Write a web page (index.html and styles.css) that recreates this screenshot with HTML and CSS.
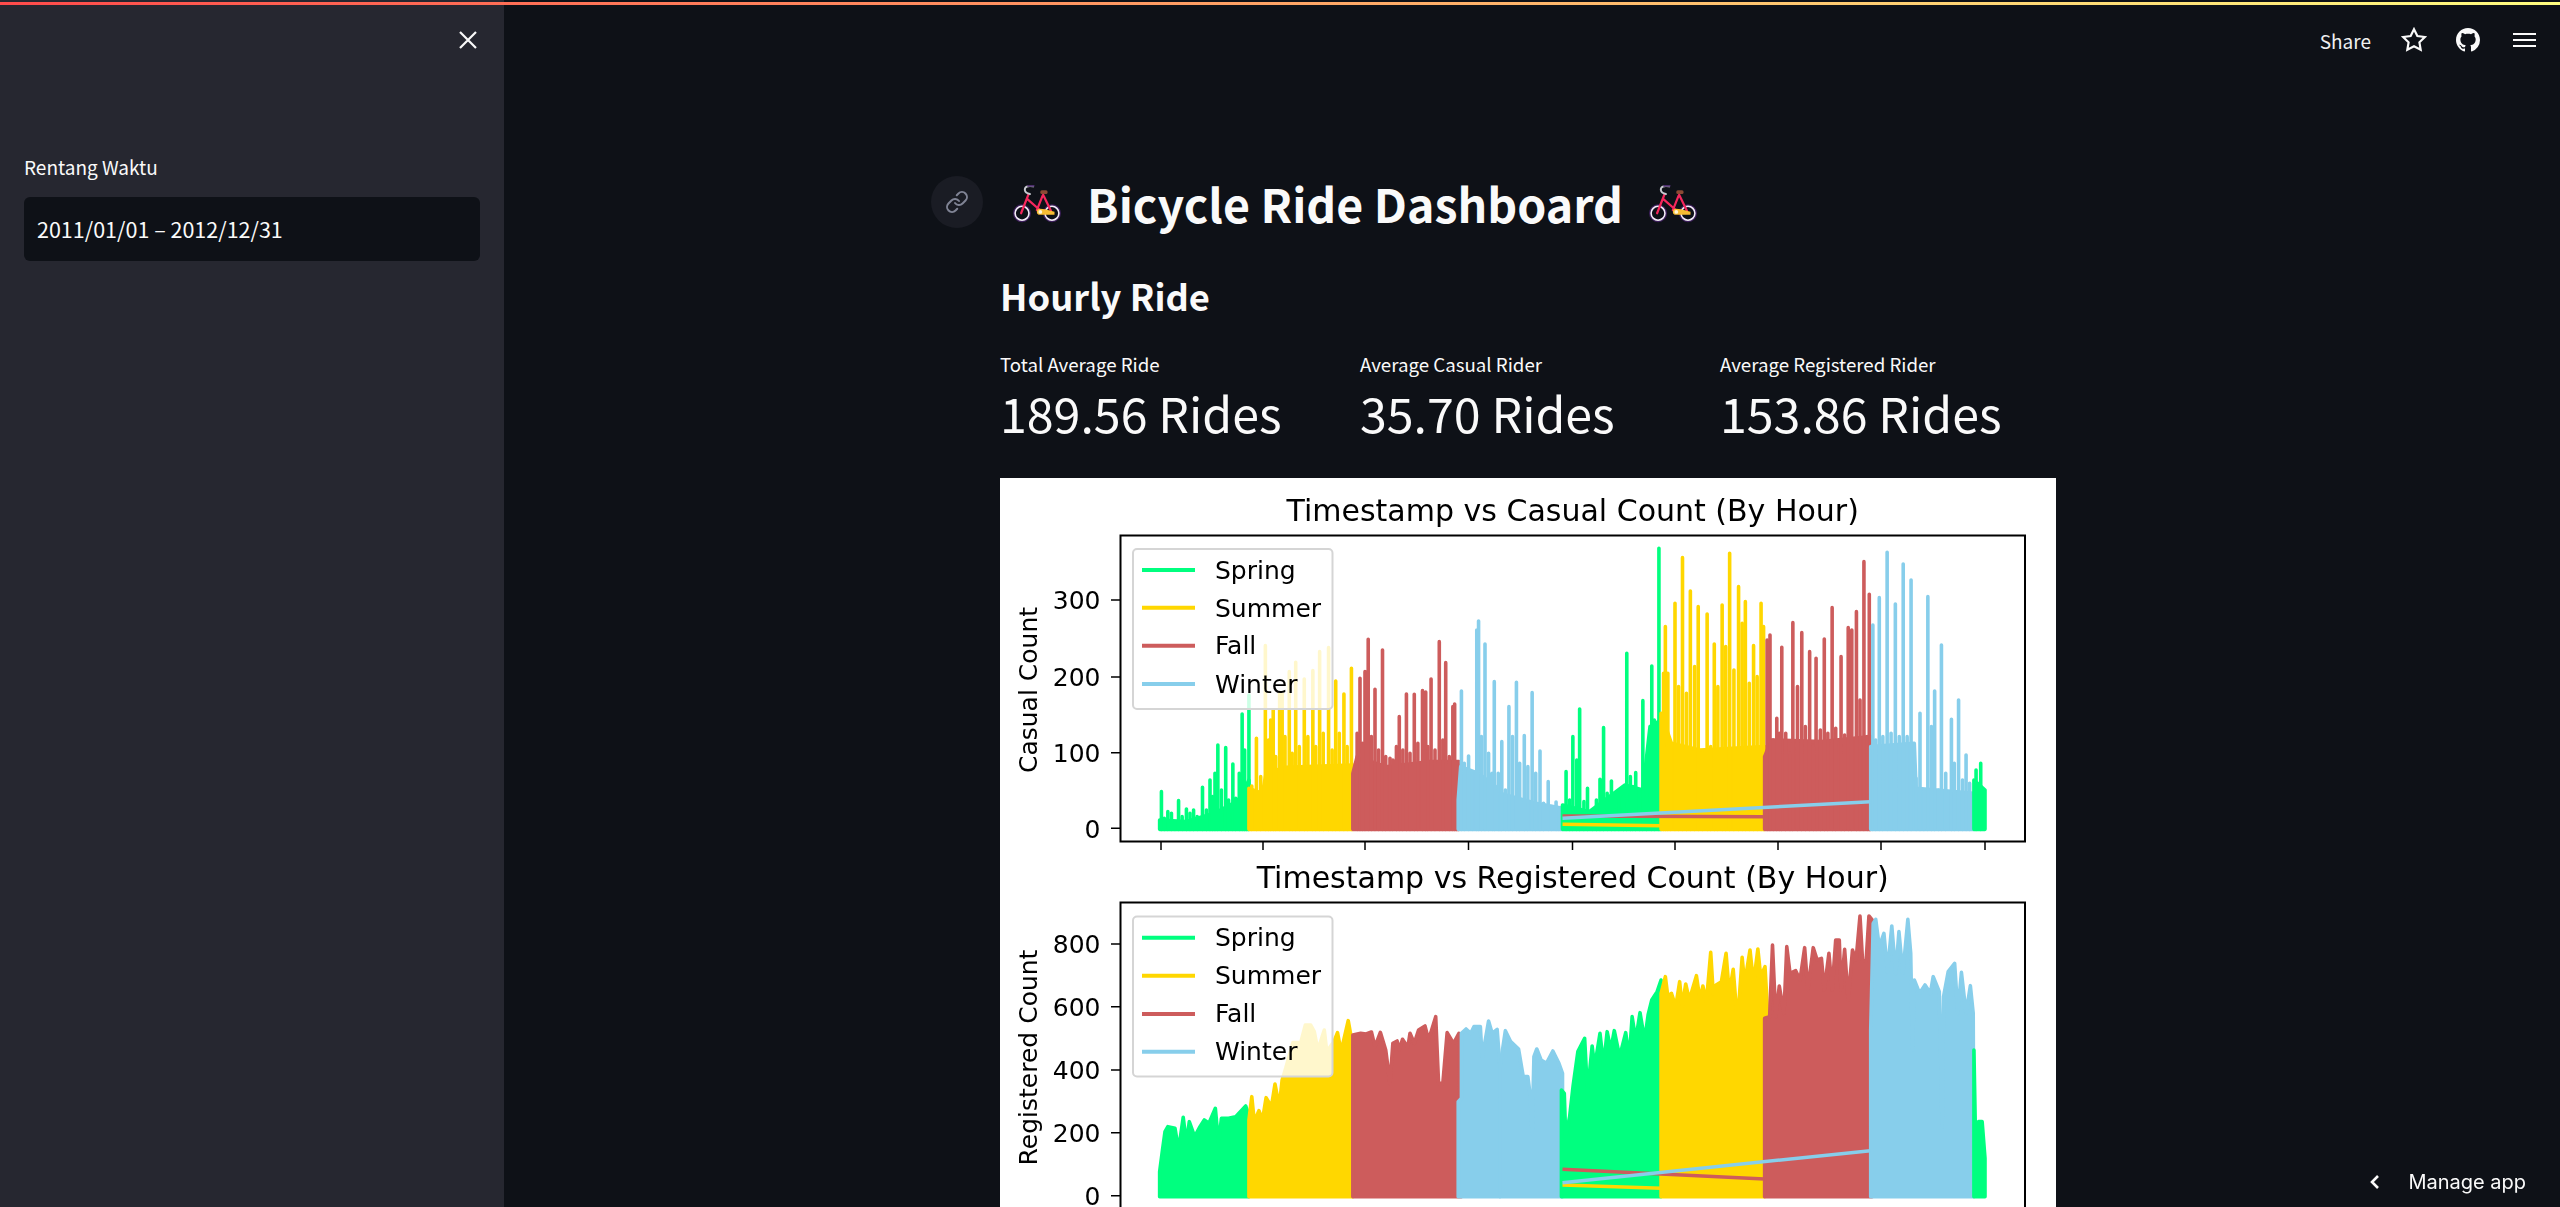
FILE: index.html
```html
<!DOCTYPE html>
<html lang="en">
<head>
<meta charset="utf-8">
<title>Bicycle Ride Dashboard</title>
<link rel="stylesheet" href="styles.css">
</head>
<body>
<svg class="defs" width="0" height="0" aria-hidden="true">
  <symbol id="bike" viewBox="30 50 165 125">
    <circle cx="65" cy="145" r="24" fill="none" stroke="#3d1f5c" stroke-width="9"/>
    <circle cx="160" cy="145" r="24" fill="none" stroke="#3d1f5c" stroke-width="9"/>
    <circle cx="65" cy="145" r="22" fill="none" stroke="#f4eef6" stroke-width="5"/>
    <circle cx="160" cy="145" r="22" fill="none" stroke="#f4eef6" stroke-width="5"/>
    <path d="M86 84 62 145M82 100 125 138M132 86 157 138M130 90 112 135" fill="none" stroke="#f5275c" stroke-width="7" stroke-linecap="round"/>
    <path d="M100 60C84 56 72 62 74 72C75 80 82 83 90 84" fill="none" stroke="#c9ccd2" stroke-width="6" stroke-linecap="round"/>
    <path d="M84 58 102 58" stroke="#4b2d6b" stroke-width="6" stroke-linecap="round"/>
    <rect x="123" y="72" width="23" height="12" rx="5" fill="#8b4a34"/>
    <path d="M112 140Q112 131 122 131L138 132 168 140V150H122Q112 150 112 140Z" fill="#f8bd33"/>
    <circle cx="123" cy="141" r="6" fill="#fff6d8"/>
  </symbol>
</svg>

<div class="decoration"></div>
<div class="app">
  <aside class="sidebar">
    <div class="sidebar-top">
      <svg class="close-icon" viewBox="0 0 18 18"><path d="M1 1 17 17M17 1 1 17"/></svg>
    </div>
    <label class="field-label">Rentang Waktu</label>
    <div class="date-input">2011/01/01 – 2012/12/31</div>
  </aside>

  <main class="main">
    <header class="toolbar">
      <span class="share">Share</span>
      <svg class="star-icon" viewBox="0 0 24 24"><polygon points="12 2 15.09 8.26 22 9.27 17 14.14 18.18 21.02 12 17.77 5.82 21.02 7 14.14 2 9.27 8.91 8.26"/></svg>
      <svg class="github-icon" viewBox="0 0 16 16"><path d="M8 0C3.58 0 0 3.58 0 8c0 3.54 2.29 6.53 5.47 7.59.4.07.55-.17.55-.38 0-.19-.01-.82-.01-1.49-2.01.37-2.53-.49-2.69-.94-.09-.23-.48-.94-.82-1.13-.28-.15-.68-.52-.01-.53.63-.01 1.08.58 1.23.82.72 1.21 1.87.87 2.33.66.07-.52.28-.87.51-1.07-1.78-.2-3.64-.89-3.64-3.95 0-.87.31-1.59.82-2.15-.08-.2-.36-1.02.08-2.12 0 0 .67-.21 2.2.82.64-.18 1.32-.27 2-.27.68 0 1.36.09 2 .27 1.53-1.04 2.2-.82 2.2-.82.44 1.1.16 1.92.08 2.12.51.56.82 1.27.82 2.15 0 3.07-1.87 3.75-3.65 3.95.29.25.54.73.54 1.48 0 1.07-.01 1.93-.01 2.2 0 .21.15.46.55.38A8.013 8.013 0 0016 8c0-4.42-3.58-8-8-8z"/></svg>
      <svg class="menu-icon" viewBox="0 0 23 14"><path d="M0 1H23M0 7H23M0 13H23"/></svg>
    </header>

    <section class="content">
      <div class="title-row">
        <a class="anchor-link">
          <svg viewBox="0 0 24 24"><path d="M10 13a5 5 0 0 0 7.54.54l3-3a5 5 0 0 0-7.07-7.07l-1.72 1.71"/><path d="M14 11a5 5 0 0 0-7.54-.54l-3 3a5 5 0 0 0 7.07 7.07l1.71-1.71"/></svg>
        </a>
        <svg class="bike-icon"><use href="#bike"/></svg>
        <h1 class="title">Bicycle Ride Dashboard</h1>
        <svg class="bike-icon"><use href="#bike"/></svg>
      </div>
      <h2 class="subtitle">Hourly Ride</h2>
      <div class="metrics">
        <div class="metric"><div class="metric-label">Total Average Ride</div><div class="metric-value">189.56 Rides</div></div>
        <div class="metric"><div class="metric-label">Average Casual Rider</div><div class="metric-value">35.70 Rides</div></div>
        <div class="metric"><div class="metric-label">Average Registered Rider</div><div class="metric-value">153.86 Rides</div></div>
      </div>

      <svg class="chart" width="1056" height="729" viewBox="1000 478 1056 729">
        <!-- chart 1 -->
        <g class="series" transform="translate(1000 480) scale(.35714 .33333)">
          <g class="spring">
            <polygon points="447,1048 447,1020 520,1025 600,1000 670,960 697,900 697,1048"/>
            <path d="M452 1048V935M470 1048V995M500 1048V962M522 1048V987M542 1048V990M567 1048V922M588 1048V900M602 1048V880M610 1048V795M632 1048V803M652 1048V852M678 1048V702M697 1048V645"/>
            <path d="M460 1048V1015M480 1048V1000M490 1048V1025M510 1048V1010M532 1048V1000M552 1048V1010M578 1048V990M595 1048V950M620 1048V930M640 1048V960M660 1048V955M670 1048V880M685 1048V810M690 1048V940"/>
          </g>
          <g class="summer">
            <polygon points="697,1048 697,925 735,940 745,880 800,862 900,858 988,855 988,1048"/>
            <path d="M705 1048V918M718 1048V775M743 1048V497M752 1048V780M765 1048V690M783 1048V640M790 1048V640M810 1048V575M828 1048V547M852 1048V597M876 1048V572M895 1048V515M920 1048V503M940 1048V603M963 1048V642M984 1048V565"/>
            <path d="M730 1048V890M758 1048V720M772 1048V830M798 1048V770M818 1048V820M838 1048V800M862 1048V770M884 1048V800M905 1048V760M930 1048V810M950 1048V760M972 1048V800"/>
          </g>
          <g class="fall">
            <polygon points="988,1048 988,880 1000,830 1080,860 1200,845 1285,845 1285,1048"/>
            <path d="M1008 1048V595M1022 1048V575M1031 1048V478M1050 1048V628M1071 1048V510M1092 1048V835M1118 1048V710M1138 1048V642M1160 1048V643M1183 1048V632M1192 1048V636M1207 1048V597M1230 1048V485M1248 1048V548M1268 1048V680M1273 1048V672"/>
            <path d="M1000 1048V760M1015 1048V790M1040 1048V770M1060 1048V810M1080 1048V830M1100 1048V840M1110 1048V800M1128 1048V810M1148 1048V820M1170 1048V790M1198 1048V800M1218 1048V810M1240 1048V780M1258 1048V830M1278 1048V850"/>
          </g>
          <g class="winter">
            <polygon points="1283,1048 1283,960 1290,860 1340,880 1400,930 1400,1048"/>
            <path d="M1292 1048V633M1312 1048V828M1335 1048V450M1340 1048V423M1358 1048V492M1384 1048V605"/>
            <path d="M1300 1048V850M1322 1048V880M1348 1048V770M1368 1048V820M1378 1048V880M1395 1048V880"/>
          </g>
        </g>
        <g class="series" transform="translate(1500 480) scale(.35714 .33333)">
          <g class="winter">
            <polygon points="0,940 100,970 175,985 175,1048 0,1048"/>
            <path d="M5 1048V785M25 1048V680M46 1048V607M68 1048V767M90 1048V638M112 1048V813M135 1048V905M157 1048V966"/>
            <path d="M15 1048V930M35 1048V770M55 1048V850M78 1048V860M100 1048V880M122 1048V970M145 1048V980M165 1048V990"/>
          </g>
          <g class="spring">
            <polygon points="175,1048 175,975 250,995 350,915 400,930 420,740 451,720 451,1048"/>
            <path d="M185 1048V875M204 1048V770M223 1048V687M245 1048V925M280 1048V898M290 1048V743M312 1048V903M333 1048V955M355 1048V520M380 1048V878M400 1048V662M425 1048V558M445 1048V205"/>
            <path d="M195 1048V960M215 1048V840M235 1048V965M260 1048V990M270 1048V960M300 1048V940M322 1048V990M345 1048V950M365 1048V890M372 1048V920M390 1048V930M410 1048V900M432 1048V720"/>
          </g>
          <g class="summer">
            <polygon points="451,1048 451,700 480,790 560,810 741,800 741,1048"/>
            <path d="M463 1048V440M470 1048V580M490 1048V370M511 1048V233M533 1048V333M555 1048V380M580 1048V402M600 1048V492M622 1048V375M643 1048V220M668 1048V320M687 1048V365M710 1048V497M731 1048V370"/>
            <path d="M458 1048V580M478 1048V790M500 1048V620M522 1048V640M545 1048V560M567 1048V870M590 1048V800M610 1048V620M632 1048V500M655 1048V570M678 1048V430M698 1048V610M720 1048V590M738 1048V440"/>
            <path class="conn" d="M175 1033 451 1037"/>
          </g>
          <g class="fall">
            <polygon points="741,1048 741,830 760,780 900,785 1038,770 1038,1048"/>
            <path d="M756 1048V465M775 1048V715M789 1048V502M820 1048V428M845 1048V458M867 1048V515M885 1048V535M908 1048V477M930 1048V383M955 1048V530M975 1048V443M998 1048V395M1019 1048V245M1034 1048V343"/>
            <path d="M748 1048V480M765 1048V780M782 1048V760M800 1048V760M812 1048V820M833 1048V620M855 1048V740M877 1048V800M897 1048V750M918 1048V760M940 1048V745M965 1048V765M985 1048V450M1008 1048V660M1028 1048V770"/>
            <path class="conn" d="M175 1008 741 1010"/>
          </g>
          <g class="winter">
            <polygon points="1038,1048 1038,800 1160,790 1165,925 1327,940 1327,1048"/>
            <path d="M1044 1048V435M1062 1048V353M1084 1048V217M1107 1048V372M1129 1048V252M1151 1048V300M1176 1048V700M1198 1048V350M1217 1048V633M1236 1048V495M1264 1048V718M1284 1048V660M1305 1048V825"/>
            <path d="M1052 1048V780M1072 1048V770M1095 1048V760M1118 1048V770M1140 1048V770M1165 1048V895M1187 1048V935M1208 1048V740M1228 1048V930M1248 1048V880M1272 1048V850M1295 1048V900M1315 1048V910"/>
            <path class="conn" d="M175 1015 1037 965"/>
          </g>
          <g class="spring">
            <polygon points="1327,1048 1327,900 1358,930 1358,1048"/>
            <path d="M1333 1048V870M1346 1048V850"/>
          </g>
        </g>

        <rect class="spine" x="1120.5" y="535.5" width="904.5" height="306"/>
        <path class="tick" d="M1111 828.3H1120M1111 752.7H1120M1111 677H1120M1111 600H1120M1161 842V850M1263 842V850M1365 842V850M1468.5 842V850M1572.5 842V850M1675 842V850M1778 842V850M1881 842V850M1985 842V850"/>
        <g class="tick-labels">
          <text x="1100.5" y="837.5">0</text>
          <text x="1100.5" y="762">100</text>
          <text x="1100.5" y="686">200</text>
          <text x="1100.5" y="609">300</text>
        </g>
        <text class="axis-label" transform="translate(1037 690) rotate(-90)">Casual Count</text>
        <text class="chart-title" x="1572.7" y="520.5">Timestamp vs Casual Count (By Hour)</text>
        <rect class="legend" x="1133" y="549" width="199.5" height="160" rx="4"/>
        <path class="handle spring-line" d="M1142 570H1195"/>
        <path class="handle summer-line" d="M1142 607.7H1195"/>
        <path class="handle fall-line" d="M1142 645.7H1195"/>
        <path class="handle winter-line" d="M1142 684H1195"/>
        <g class="legend-text">
          <text x="1215" y="578.5">Spring</text>
          <text x="1215" y="616.5">Summer</text>
          <text x="1215" y="654">Fall</text>
          <text x="1215" y="692.5">Winter</text>
        </g>

        <!-- chart 2 -->
        <g class="series" transform="translate(1000 850) scale(.35714 .33333)">
          <polygon class="spring" points="447,1040 447,965 455,900 462,845 470,830 490,835 500,900 513,802 522,880 530,815 545,860 560,830 572,810 585,820 603,775 612,880 620,805 640,805 660,800 688,768 697,795 697,1040"/>
          <polygon class="summer" points="697,1040 697,810 705,740 712,815 725,782 735,810 745,743 760,770 770,702 782,770 790,690 800,655 820,578 842,578 855,525 870,525 880,545 890,600 908,540 915,605 935,575 945,548 955,605 975,512 988,590 988,1040"/>
          <polygon class="fall" points="988,1040 988,555 1010,550 1025,552 1040,546 1050,590 1065,547 1080,600 1092,700 1100,580 1112,573 1118,600 1127,568 1142,592 1148,550 1160,580 1172,540 1190,528 1200,570 1220,500 1228,700 1240,700 1252,548 1270,580 1285,550 1292,1040"/>
          <polygon class="winter" points="1283,1040 1283,755 1292,745 1292,550 1305,537 1318,550 1327,530 1345,530 1350,625 1368,513 1378,550 1392,538 1400,650 1400,1040"/>
        </g>
        <g class="series" transform="translate(1500 850) scale(.35714 .33333)">
          <polygon class="winter" points="0,1040 0,650 15,542 30,575 52,597 65,680 78,680 85,740 90,850 95,620 103,597 115,630 130,640 148,603 165,640 175,670 175,1040"/>
          <polygon class="spring" points="172,1040 172,720 180,730 184,860 195,800 205,705 218,605 237,565 245,730 258,588 265,650 280,550 290,645 300,545 310,600 320,542 335,620 352,548 362,625 370,500 380,570 392,488 405,570 415,493 425,450 440,425 451,390 451,1040"/>
          <polygon class="summer" points="451,1040 451,430 463,380 470,440 480,430 492,470 503,395 510,470 520,402 530,450 550,377 560,450 568,408 578,455 590,307 597,430 605,405 620,395 633,310 642,430 653,358 665,520 678,322 685,400 700,300 710,400 722,297 730,380 742,350 750,500 741,1040"/>
          <path class="summer conn" d="M175 1005 451 1015"/>
          <polygon class="fall" points="741,1040 741,505 755,500 763,285 772,500 782,408 795,490 803,290 812,370 828,362 840,390 853,293 862,420 877,293 888,330 900,325 908,420 921,310 930,420 940,270 950,270 955,420 965,298 975,450 987,300 997,330 1008,198 1015,330 1025,335 1033,198 1042,210 1042,1040"/>
          <path class="fall conn" d="M175 958 741 987"/>
          <polygon class="winter" points="1038,1040 1038,540 1045,220 1052,208 1062,290 1075,250 1085,365 1097,228 1108,370 1117,245 1128,370 1142,208 1150,310 1155,600 1160,390 1175,430 1190,405 1205,430 1213,380 1230,425 1238,830 1242,440 1255,365 1273,340 1282,490 1292,367 1305,490 1317,407 1325,490 1327,1040"/>
          <path class="winter conn" d="M175 998 1037 902"/>
          <polygon class="spring" points="1327,1040 1327,600 1332,900 1340,815 1350,815 1358,925 1358,1040"/>
        </g>

        <rect class="spine" x="1120.5" y="902.5" width="904.5" height="306"/>
        <path class="tick" d="M1111 1195.7H1120M1111 1132.7H1120M1111 1070H1120M1111 1006.7H1120M1111 944H1120"/>
        <g class="tick-labels">
          <text x="1100.5" y="1205">0</text>
          <text x="1100.5" y="1142">200</text>
          <text x="1100.5" y="1079">400</text>
          <text x="1100.5" y="1016">600</text>
          <text x="1100.5" y="953">800</text>
        </g>
        <text class="axis-label" transform="translate(1037 1057.5) rotate(-90)">Registered Count</text>
        <text class="chart-title" x="1572.7" y="888">Timestamp vs Registered Count (By Hour)</text>
        <rect class="legend" x="1133" y="916.5" width="199.5" height="160" rx="4"/>
        <path class="handle spring-line" d="M1142 937.7H1195"/>
        <path class="handle summer-line" d="M1142 975.7H1195"/>
        <path class="handle fall-line" d="M1142 1014H1195"/>
        <path class="handle winter-line" d="M1142 1051.7H1195"/>
        <g class="legend-text">
          <text x="1215" y="946">Spring</text>
          <text x="1215" y="984">Summer</text>
          <text x="1215" y="1022">Fall</text>
          <text x="1215" y="1060">Winter</text>
        </g>
      </svg>
    </section>
  </main>
</div>

<div class="manage-app">
  <svg class="chevron" viewBox="0 0 11 16"><path d="M9 2 3 8 9 14"/></svg>
  <span>Manage app</span>
</div>
</body>
</html>
```

FILE: styles.css
```css
* { box-sizing: border-box; }

html, body {
  margin: 0;
  height: 1207px;
  overflow: hidden;
  background: #0e1117;
  color: #fafafa;
  font-family: "Noto Sans CJK JP", "Source Sans Pro", sans-serif;
}

.defs { position: absolute; }

.decoration {
  position: absolute;
  top: 2px;
  left: 0;
  right: 0;
  height: 3px;
  background: linear-gradient(90deg, #ff4b4b, #fffd80);
  z-index: 5;
}

.app {
  display: flex;
  height: 1207px;
}

/* sidebar */
.sidebar {
  flex: 0 0 504px;
  background: #262730;
  padding: 0 24px;
}

.sidebar-top {
  height: 150px;
  padding: 31px 0 0 435px;
}

.close-icon {
  display: block;
  width: 18px;
  height: 18px;
  fill: none;
  stroke: #fafafa;
  stroke-width: 2.2;
}

.field-label {
  display: block;
  height: 34px;
  font-size: 19px;
  line-height: 34px;
}

.date-input {
  margin-top: 13px;
  height: 64px;
  padding: 0 13px;
  border-radius: 6px;
  background: #0e1117;
  font-size: 21.5px;
  line-height: 64px;
}

/* main */
.main {
  flex: 1;
  min-width: 0;
  padding-right: 8px;
}

.toolbar {
  display: flex;
  align-items: center;
  justify-content: flex-end;
  height: 80px;
  margin-right: -8px;
  padding-right: 24px;
}

.share {
  font-size: 19px;
  margin-right: 30px;
  color: #f0f0f0;
}

.star-icon {
  width: 26px;
  height: 26px;
  margin-right: 29px;
  fill: none;
  stroke: #fafafa;
  stroke-width: 2;
}

.github-icon {
  width: 24px;
  height: 24px;
  margin-right: 33px;
  fill: #fafafa;
}

.menu-icon {
  width: 23px;
  height: 14px;
  fill: none;
  stroke: #fafafa;
  stroke-width: 2;
}

.content {
  width: 1056px;
  margin: 0 auto;
}

.title-row {
  position: relative;
  display: flex;
  align-items: center;
  height: 81px;
  margin-top: 82px;
  padding-left: 11px;
}

.anchor-link {
  position: absolute;
  left: -69px;
  top: 14px;
  width: 52px;
  height: 52px;
  display: flex;
  align-items: center;
  justify-content: center;
  border-radius: 50%;
  background: #1a1c24;
}

.anchor-link svg {
  width: 24px;
  height: 24px;
  fill: none;
  stroke: #808495;
  stroke-width: 2;
  stroke-linecap: round;
  stroke-linejoin: round;
}

.bike-icon {
  flex: none;
  width: 52px;
  height: 40px;
}

.title {
  margin: 0 24px;
  font-size: 46.5px;
  font-weight: 700;
  line-height: 81px;
  white-space: nowrap;
}

.subtitle {
  margin: 24px 0 0;
  height: 56px;
  font-size: 36.3px;
  font-weight: 700;
  line-height: 56px;
}

.metrics {
  display: grid;
  grid-template-columns: repeat(3, 1fr);
  gap: 24px;
  margin-top: 26px;
}

.metric-label {
  height: 30px;
  font-size: 18.7px;
  line-height: 30px;
}

.metric-value {
  height: 66px;
  font-size: 48.3px;
  line-height: 66px;
  white-space: nowrap;
}

/* chart */
.chart {
  display: block;
  margin-top: 33px;
  background: #fff;
  font-family: "DejaVu Sans", sans-serif;
  filter: blur(.4px);
}

.series polygon, .series path {
  vector-effect: non-scaling-stroke;
  stroke-linejoin: round;
  stroke-linecap: round;
  stroke-width: 3.6px;
}

.series path { fill: none; }

.series .conn { stroke-width: 3.5px; stroke-linecap: butt; }

.spring { fill: #00ff7f; stroke: #00ff7f; }
.summer { fill: #ffd700; stroke: #ffd700; }
.fall { fill: #cd5c5c; stroke: #cd5c5c; }
.winter { fill: #87ceeb; stroke: #87ceeb; }

.spine {
  fill: none;
  stroke: #000;
  stroke-width: 2px;
}

.tick {
  fill: none;
  stroke: #000;
  stroke-width: 1.5px;
}

.tick-labels text {
  font-size: 25px;
  text-anchor: end;
}

.axis-label {
  font-size: 25px;
  text-anchor: middle;
}

.chart-title {
  font-size: 30px;
  text-anchor: middle;
}

.legend {
  fill: rgba(255, 255, 255, .8);
  stroke: #d5d5d5;
  stroke-width: 2px;
}

.handle {
  fill: none;
  stroke-width: 4px;
}

.spring-line { stroke: #00ff7f; }
.summer-line { stroke: #ffd700; }
.fall-line { stroke: #cd5c5c; }
.winter-line { stroke: #87ceeb; }

.legend-text text { font-size: 25px; }

/* manage app */
.manage-app {
  position: fixed;
  right: 34px;
  bottom: 12px;
  display: flex;
  align-items: center;
  gap: 28px;
  height: 26px;
  font-family: "Inter", sans-serif;
  font-size: 20px;
  color: #fafafa;
}

.chevron {
  width: 11px;
  height: 16px;
  fill: none;
  stroke: #fafafa;
  stroke-width: 2.6;
}
```
